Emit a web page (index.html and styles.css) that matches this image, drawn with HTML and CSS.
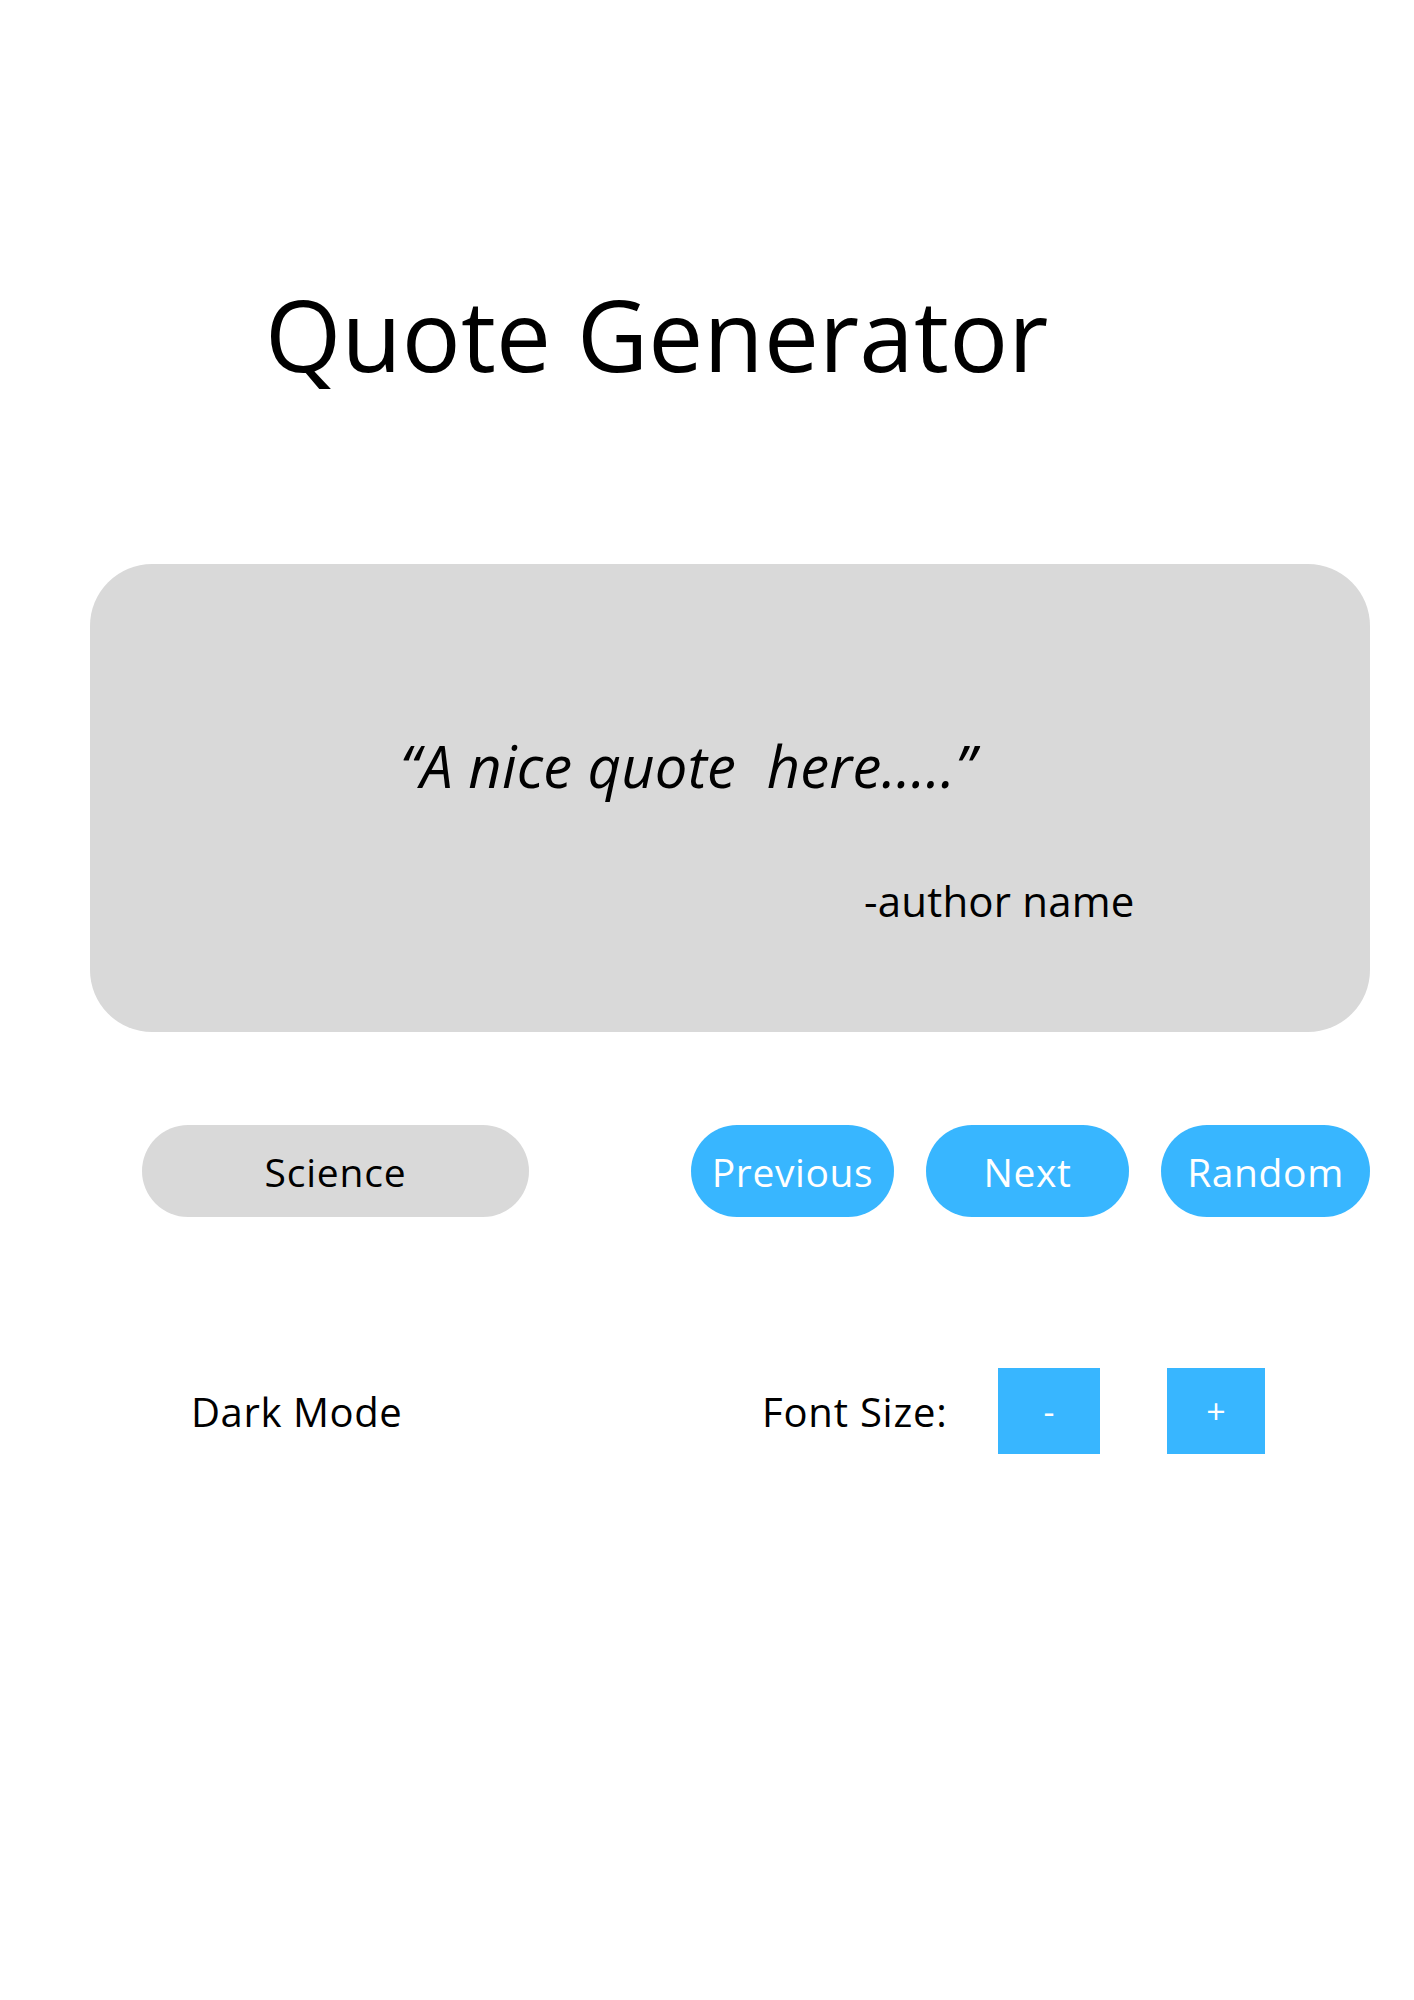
FILE: index.html
```html
<!DOCTYPE html>
<html>
<head>
<meta charset="utf-8">
<link rel="stylesheet" href="styles.css">
</head>
<body>
<div class="page">
  <h1 class="title">Quote Generator</h1>
  <div class="card">
    <p class="quote">“A nice quote&nbsp; here.....”</p>
    <p class="author">-author name</p>
  </div>
  <div class="actions">
    <div class="category">Science</div>
    <div class="nav">
      <button class="pill btn-prev">Previous</button>
      <button class="pill btn-next">Next</button>
      <button class="pill btn-rand">Random</button>
    </div>
  </div>
  <div class="settings">
    <div class="dark">Dark Mode</div>
    <div class="font-label">Font Size:</div>
    <button class="sq sq-minus">-</button>
    <button class="sq sq-plus">+</button>
  </div>
</div>
</body>
</html>
```
FILE: styles.css
```css
html, body {
  margin: 0;
  padding: 0;
  background: #ffffff;
}
body {
  font-family: "Open Sans", "Noto Sans", sans-serif;
  color: #000;
}
.page {
  width: 1414px;
  height: 2000px;
  padding-top: 285px;
  box-sizing: border-box;
}
.title {
  margin: 0 0 0 265px;
  font-size: 98px;
  font-weight: 400;
  line-height: 98px;
  letter-spacing: 0.2px;
}
.card {
  margin: 181px 0 0 90px;
  width: 1280px;
  height: 468px;
  background: #d9d9d9;
  border-radius: 62px;
  box-sizing: border-box;
  padding-top: 170px;
}
.quote {
  margin: 0 0 0 310px;
  font-size: 58px;
  font-style: italic;
  line-height: 64px;
  letter-spacing: 0.2px;
}
.author {
  margin: 78px 0 0 774px;
  font-size: 42px;
  line-height: 50px;
  letter-spacing: 0.2px;
}
.actions {
  display: flex;
  margin: 93px 0 0 142px;
  width: 1228px;
  justify-content: space-between;
}
.category {
  width: 387px;
  height: 92px;
  border-radius: 46px;
  background: #d9d9d9;
  font-size: 39px;
  letter-spacing: 0.8px;
  display: flex;
  align-items: center;
  justify-content: center;
}
.nav {
  display: flex;
  gap: 32px;
}
.pill {
  height: 92px;
  border: none;
  border-radius: 46px;
  background: #38b6ff;
  color: #ffffff;
  font-family: "Open Sans", "Noto Sans", sans-serif;
  font-size: 39px;
  letter-spacing: 0.6px;
  padding: 0;
}
.btn-prev { width: 203px; }
.btn-next { width: 203px; }
.btn-rand { width: 209px; }
.settings {
  display: flex;
  align-items: center;
  margin: 151px 0 0 191px;
  height: 86px;
}
.dark {
  font-size: 40px;
  letter-spacing: 0.6px;
  width: 571px;
}
.font-label {
  font-size: 40px;
  letter-spacing: 0.8px;
  width: 236px;
}
.sq {
  height: 86px;
  border: none;
  background: #38b6ff;
  color: #ffffff;
  font-family: "Open Sans", "Noto Sans", sans-serif;
  font-size: 34px;
  padding: 0;
}
.sq-minus { width: 102px; margin-right: 67px; }
.sq-plus { width: 98px; }
```
